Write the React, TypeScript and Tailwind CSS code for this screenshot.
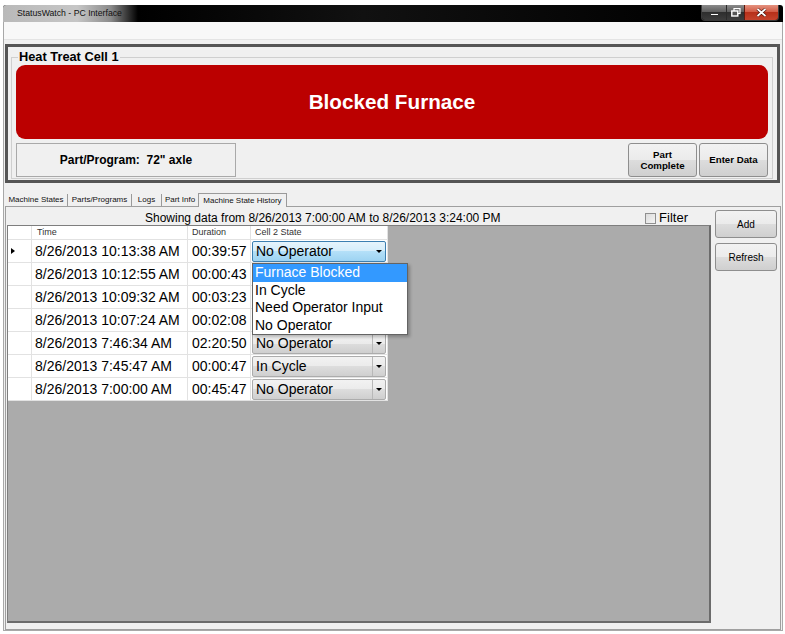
import React from "react";

const rows: [string, string, string][] = [
  ["8/26/2013 10:13:38 AM", "00:39:57", "No Operator"],
  ["8/26/2013 10:12:55 AM", "00:00:43", "Furnace Blocked"],
  ["8/26/2013 10:09:32 AM", "00:03:23", "In Cycle"],
  ["8/26/2013 10:07:24 AM", "00:02:08", "Need Operator Input"],
  ["8/26/2013 7:46:34 AM", "02:20:50", "No Operator"],
  ["8/26/2013 7:45:47 AM", "00:00:47", "In Cycle"],
  ["8/26/2013 7:00:00 AM", "00:45:47", "No Operator"],
];

const options = ["Furnace Blocked", "In Cycle", "Need Operator Input", "No Operator"];

function Arrow() {
  return (
    <div className="w-0 h-0 border-l-[3px] border-r-[3px] border-t-[3px] border-l-transparent border-r-transparent border-t-black" />
  );
}

function GreyCombo({ label }: { label: string }) {
  return (
    <div className="mx-px mt-px h-[21px] flex border border-[#acacac] rounded-[2px] bg-[linear-gradient(#f2f2f2,#ebebeb_50%,#dddddd_50%,#cfcfcf)]">
      <div className="flex-1 pl-[3px] text-[14px] leading-[19px] text-black">{label}</div>
      <div className="w-[13px] border-l border-[#b8b8b8] flex items-center justify-center">
        <Arrow />
      </div>
    </div>
  );
}

function BlueCombo({ label }: { label: string }) {
  return (
    <div className="mx-px mt-px h-[21px] flex border border-[#3c7fb1] rounded-[2px] bg-[linear-gradient(#e6f4fc,#d3edfb_50%,#b4e0f8_50%,#9dd3f2)]">
      <div className="flex-1 pl-[3px] text-[14px] leading-[19px] text-black">{label}</div>
      <div className="w-[13px] flex items-center justify-center">
        <Arrow />
      </div>
    </div>
  );
}

function WinButton({ children, className }: { children: React.ReactNode; className?: string }) {
  return (
    <button
      className={
        "border border-[#8e8e8e] rounded-[3px] bg-[linear-gradient(#f2f2f2,#ebebeb_50%,#dddddd_50%,#cfcfcf)] text-black flex flex-col items-center justify-center " +
        (className ?? "")
      }
    >
      {children}
    </button>
  );
}

export default function App() {
  return (
    <div className="w-[785px] h-[634px] bg-white overflow-hidden font-['Liberation_Sans',Arial,sans-serif] text-black">
      <div className="ml-[3px] mt-[5px] w-[780px] flex flex-col">
        {/* Title bar */}
        <div className="h-[17px] flex bg-black rounded-t-[3px] overflow-hidden">
          <div className="w-[135px] h-full bg-[linear-gradient(to_right,#b9b9b9,#c6c6c6_55%,#8a8a8a_80%,#000)] flex items-center pl-[14px] text-[8.7px] text-[#111] whitespace-nowrap">
            StatusWatch - PC Interface
          </div>
          <div className="flex-1 bg-[linear-gradient(to_right,#000,#111_40%,#000)]" />
          <div className="flex h-[16px] mr-[4px] rounded-b-[4px] overflow-hidden border border-t-0 border-[#3a3a3a]">
            <div className="w-[24px] bg-[linear-gradient(#8a8a8a,#5a5a5a_50%,#2e2e2e_50%,#3c3c3c)] flex items-end justify-center pb-[4px]">
              <div className="w-[9px] h-[3px] bg-white border border-[#333]" />
            </div>
            <div className="w-[18px] border-l border-[#2a2a2a] bg-[linear-gradient(#8a8a8a,#5a5a5a_50%,#2e2e2e_50%,#3c3c3c)] flex items-center justify-center">
              <svg width="10" height="9" viewBox="0 0 10 9">
                <rect x="3" y="0.5" width="6" height="5" fill="none" stroke="white" strokeWidth="1.2" />
                <rect x="0.8" y="3" width="6" height="5" fill="#555" stroke="white" strokeWidth="1.4" />
              </svg>
            </div>
            <div className="w-[34px] border-l border-[#5a1a10] bg-[linear-gradient(#e4927f,#d0553f_50%,#b7301a_50%,#c4432c)] flex items-center justify-center">
              <svg width="11" height="9" viewBox="0 0 11 9">
                <path d="M1.5 1 L9.5 8 M9.5 1 L1.5 8" stroke="#3a0a05" strokeWidth="3" />
                <path d="M1.5 1 L9.5 8 M9.5 1 L1.5 8" stroke="white" strokeWidth="1.8" />
              </svg>
            </div>
          </div>
        </div>

        {/* Client area */}
        <div className="h-[609px] bg-[#f0f0f0] border-x border-b border-[#a8a8a8] flex flex-col">
          <div className="h-[18px] bg-[#f8f8f8] border-b border-[#e4e4e4]" />

          {/* Status frame */}
          <div className="mt-[4px] ml-px w-[775px] h-[139px] border-[3px] border-[#555555] bg-[#f0f0f0]">
            <fieldset className="ml-[3px] mt-[3px] w-[762px] h-[129px] border border-[#cfcfcf] px-[4px] pb-[1px] flex flex-col">
              <legend className="ml-[2px] px-px text-[12.8px] font-bold leading-[14px]">Heat Treat Cell 1</legend>
              <div className="mt-px h-[74px] rounded-[9px] bg-[#bb0000] flex items-center justify-center">
                <span className="text-white font-bold text-[20.7px]">Blocked Furnace</span>
              </div>
              <div className="mt-[4px] flex justify-between">
                <div className="w-[220px] h-[34px] border border-[#a9a9a9] flex items-center justify-center text-[12px] font-bold whitespace-pre">
                  {'Part/Program:  72" axle'}
                </div>
                <div className="flex gap-[2px]">
                  <WinButton className="w-[69px] h-[34px] text-[9.7px] font-bold leading-[11px]">
                    <span>Part</span>
                    <span>Complete</span>
                  </WinButton>
                  <WinButton className="w-[69px] h-[34px] text-[9.7px] font-bold">Enter Data</WinButton>
                </div>
              </div>
            </fieldset>
          </div>

          {/* Tabs */}
          <div className="mt-[9px] ml-px h-[14px] flex items-end text-[8px] leading-[12px] text-[#111] whitespace-nowrap">
            <div className="w-[63px] h-[12px] border-r border-[#9a9a9a] text-center">Machine States</div>
            <div className="w-[64px] h-[12px] border-r border-[#9a9a9a] text-center">Parts/Programs</div>
            <div className="w-[30px] h-[12px] border-r border-[#9a9a9a] text-center">Logs</div>
            <div className="w-[36px] h-[12px] text-center">Part Info</div>
            <div className="w-[89px] h-[14px] border-x border-t border-[#9a9a9a] bg-[#f0f0f0] text-center leading-[13px] -mb-px relative z-10">
              Machine State History
            </div>
          </div>

          {/* Tab panel */}
          <div className="ml-px w-[776px] h-[424px] border border-[#9f9f9f] flex">
            <div className="ml-px w-[704px] flex flex-col">
              <div className="h-[18px] flex items-start">
                <span className="ml-[138px] mt-[3px] text-[12px] leading-[16px] whitespace-nowrap">
                  Showing data from 8/26/2013 7:00:00 AM to 8/26/2013 3:24:00 PM
                </span>
                <div className="ml-auto mr-[23px] mt-[4px] flex items-center gap-[3px]">
                  <div className="w-[11px] h-[11px] border border-[#8f8f8f] bg-[linear-gradient(135deg,#dcdcdc,#f4f4f4)]" />
                  <span className="text-[13px] leading-[14px]">Filter</span>
                </div>
              </div>

              {/* Grid */}
              <div className="h-[398px] bg-[#ababab] border border-[#7e7e7e] border-b-2 border-r-2 border-b-[#6b6b6b] border-r-[#6b6b6b]">
                <div className="flex h-[14px] w-[380px] bg-white text-[9px] leading-[13px] text-[#333]">
                  <div className="w-[24px] border-r border-b border-[#e2e2e2]" />
                  <div className="w-[156px] border-r border-b border-[#e2e2e2] pl-[5px]">Time</div>
                  <div className="w-[63px] border-r border-b border-[#e2e2e2] pl-[4px]">Duration</div>
                  <div className="w-[137px] border-r border-b border-[#e2e2e2] pl-[4px]">Cell 2 State</div>
                </div>
                {rows.map((r, i) => (
                  <div key={i} className="flex h-[23px] w-[380px] bg-white text-[14px] leading-[23px]">
                    <div className="w-[24px] border-r border-b border-[#e2e2e2] flex items-center pl-[3px]">
                      {i === 0 && (
                        <div className="w-0 h-0 border-t-[3px] border-b-[3px] border-l-[4px] border-t-transparent border-b-transparent border-l-black" />
                      )}
                    </div>
                    <div className="w-[156px] border-r border-b border-[#e2e2e2] pl-[3px] whitespace-nowrap">{r[0]}</div>
                    <div className="w-[63px] border-r border-b border-[#e2e2e2] pl-[4px] whitespace-nowrap">{r[1]}</div>
                    <div className="w-[137px] border-r border-b border-[#e2e2e2] relative">
                      {i === 0 && <BlueCombo label={r[2]} />}
                      {i >= 4 && <GreyCombo label={r[2]} />}
                      {i === 0 && (
                        <div className="absolute left-px top-[23px] w-[156px] h-[72px] bg-white border border-[#646464] z-20 shadow-[2px_2px_3px_rgba(0,0,0,0.25)]">
                          {options.map((o, j) => (
                            <div
                              key={o}
                              className={
                                "h-[17.5px] pl-[2px] text-[14px] leading-[17px] whitespace-nowrap " +
                                (j === 0 ? "bg-[#3399ff] text-white" : "text-black")
                              }
                            >
                              {o}
                            </div>
                          ))}
                        </div>
                      )}
                    </div>
                  </div>
                ))}
              </div>
            </div>

            {/* Right buttons */}
            <div className="ml-[4px] pt-[3px] w-[62px] flex flex-col gap-[5px]">
              <WinButton className="h-[28px] text-[10px]">Add</WinButton>
              <WinButton className="h-[28px] text-[10px]">Refresh</WinButton>
            </div>
          </div>
        </div>
      </div>
    </div>
  );
}
